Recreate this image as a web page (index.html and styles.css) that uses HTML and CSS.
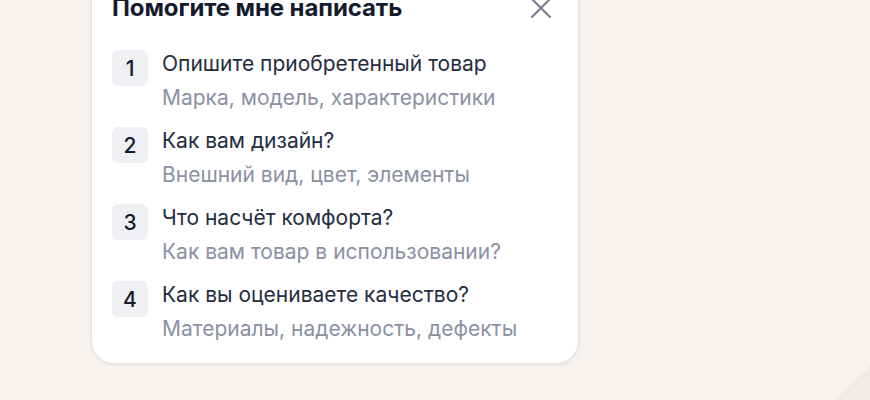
FILE: index.html
```html
<!DOCTYPE html>
<html lang="ru">
<head>
<meta charset="utf-8">
<link rel="stylesheet" href="styles.css">
</head>
<body>
<div class="decor"></div>
<section class="card">
  <header class="card-head">
    <h2 class="card-title">Помогите мне написать</h2>
    <button class="close" aria-label="Закрыть">
      <svg width="24" height="24" viewBox="0 0 24 24" fill="none" stroke="currentColor" stroke-width="2" stroke-linecap="round"><path d="M3 3 L21 21 M21 3 L3 21"/></svg>
    </button>
  </header>
  <ol class="steps">
    <li class="step">
      <span class="num">1</span>
      <div class="step-text">
        <div class="step-title">Опишите приобретенный товар</div>
        <div class="step-sub">Марка, модель, характеристики</div>
      </div>
    </li>
    <li class="step">
      <span class="num">2</span>
      <div class="step-text">
        <div class="step-title">Как вам дизайн?</div>
        <div class="step-sub">Внешний вид, цвет, элементы</div>
      </div>
    </li>
    <li class="step">
      <span class="num">3</span>
      <div class="step-text">
        <div class="step-title">Что насчёт комфорта?</div>
        <div class="step-sub">Как вам товар в использовании?</div>
      </div>
    </li>
    <li class="step">
      <span class="num">4</span>
      <div class="step-text">
        <div class="step-title">Как вы оцениваете качество?</div>
        <div class="step-sub">Материалы, надежность, дефекты</div>
      </div>
    </li>
  </ol>
</section>
</body>
</html>
```
FILE: styles.css
```css
* { box-sizing: border-box; }
html, body { margin: 0; padding: 0; }
body {
  background: #f6f2ef;
  font-family: Inter, "Noto Sans", sans-serif;
  width: 870px;
  height: 400px;
  overflow: hidden;
  position: relative;
}
.decor {
  position: absolute;
  right: 0;
  bottom: 0;
  width: 34px;
  height: 34px;
  background: linear-gradient(to bottom right, transparent 50%, #f1ebe7 50%);
}
.card {
  position: relative;
  margin: -27px 0 0 90px;
  width: 490px;
  background: #ffffff;
  border: 2px solid #ede5df;
  border-radius: 24px;
  padding: 19px 22px 20px 20px;
  box-shadow: 0 1px 2px rgba(120, 90, 70, 0.05);
}
.card-head {
  display: flex;
  justify-content: space-between;
  align-items: center;
  height: 28px;
}
.card-title {
  margin: 0;
  font-size: 24px;
  line-height: 28px;
  font-weight: 700;
  color: #131b2e;
  letter-spacing: -0.1px;
}
.close {
  border: 0;
  background: none;
  padding: 0;
  margin-right: 3px;
  width: 24px;
  height: 24px;
  color: #737a8b;
  display: flex;
}
.steps {
  list-style: none;
  margin: 28px 0 0;
  padding: 0;
  display: flex;
  flex-direction: column;
  gap: 15px;
}
.step {
  display: flex;
  align-items: flex-start;
  gap: 14px;
}
.num {
  flex: none;
  width: 36px;
  height: 36px;
  border-radius: 6px;
  background: #eef0f4;
  color: #141b2c;
  font-size: 21px;
  font-weight: 500;
  display: flex;
  align-items: center;
  justify-content: center;
}
.step-title {
  font-size: 21px;
  line-height: 28px;
  color: #242d40;
}
.step-sub {
  margin-top: 6px;
  font-size: 21px;
  line-height: 28px;
  color: #8a91a3;
}
```
